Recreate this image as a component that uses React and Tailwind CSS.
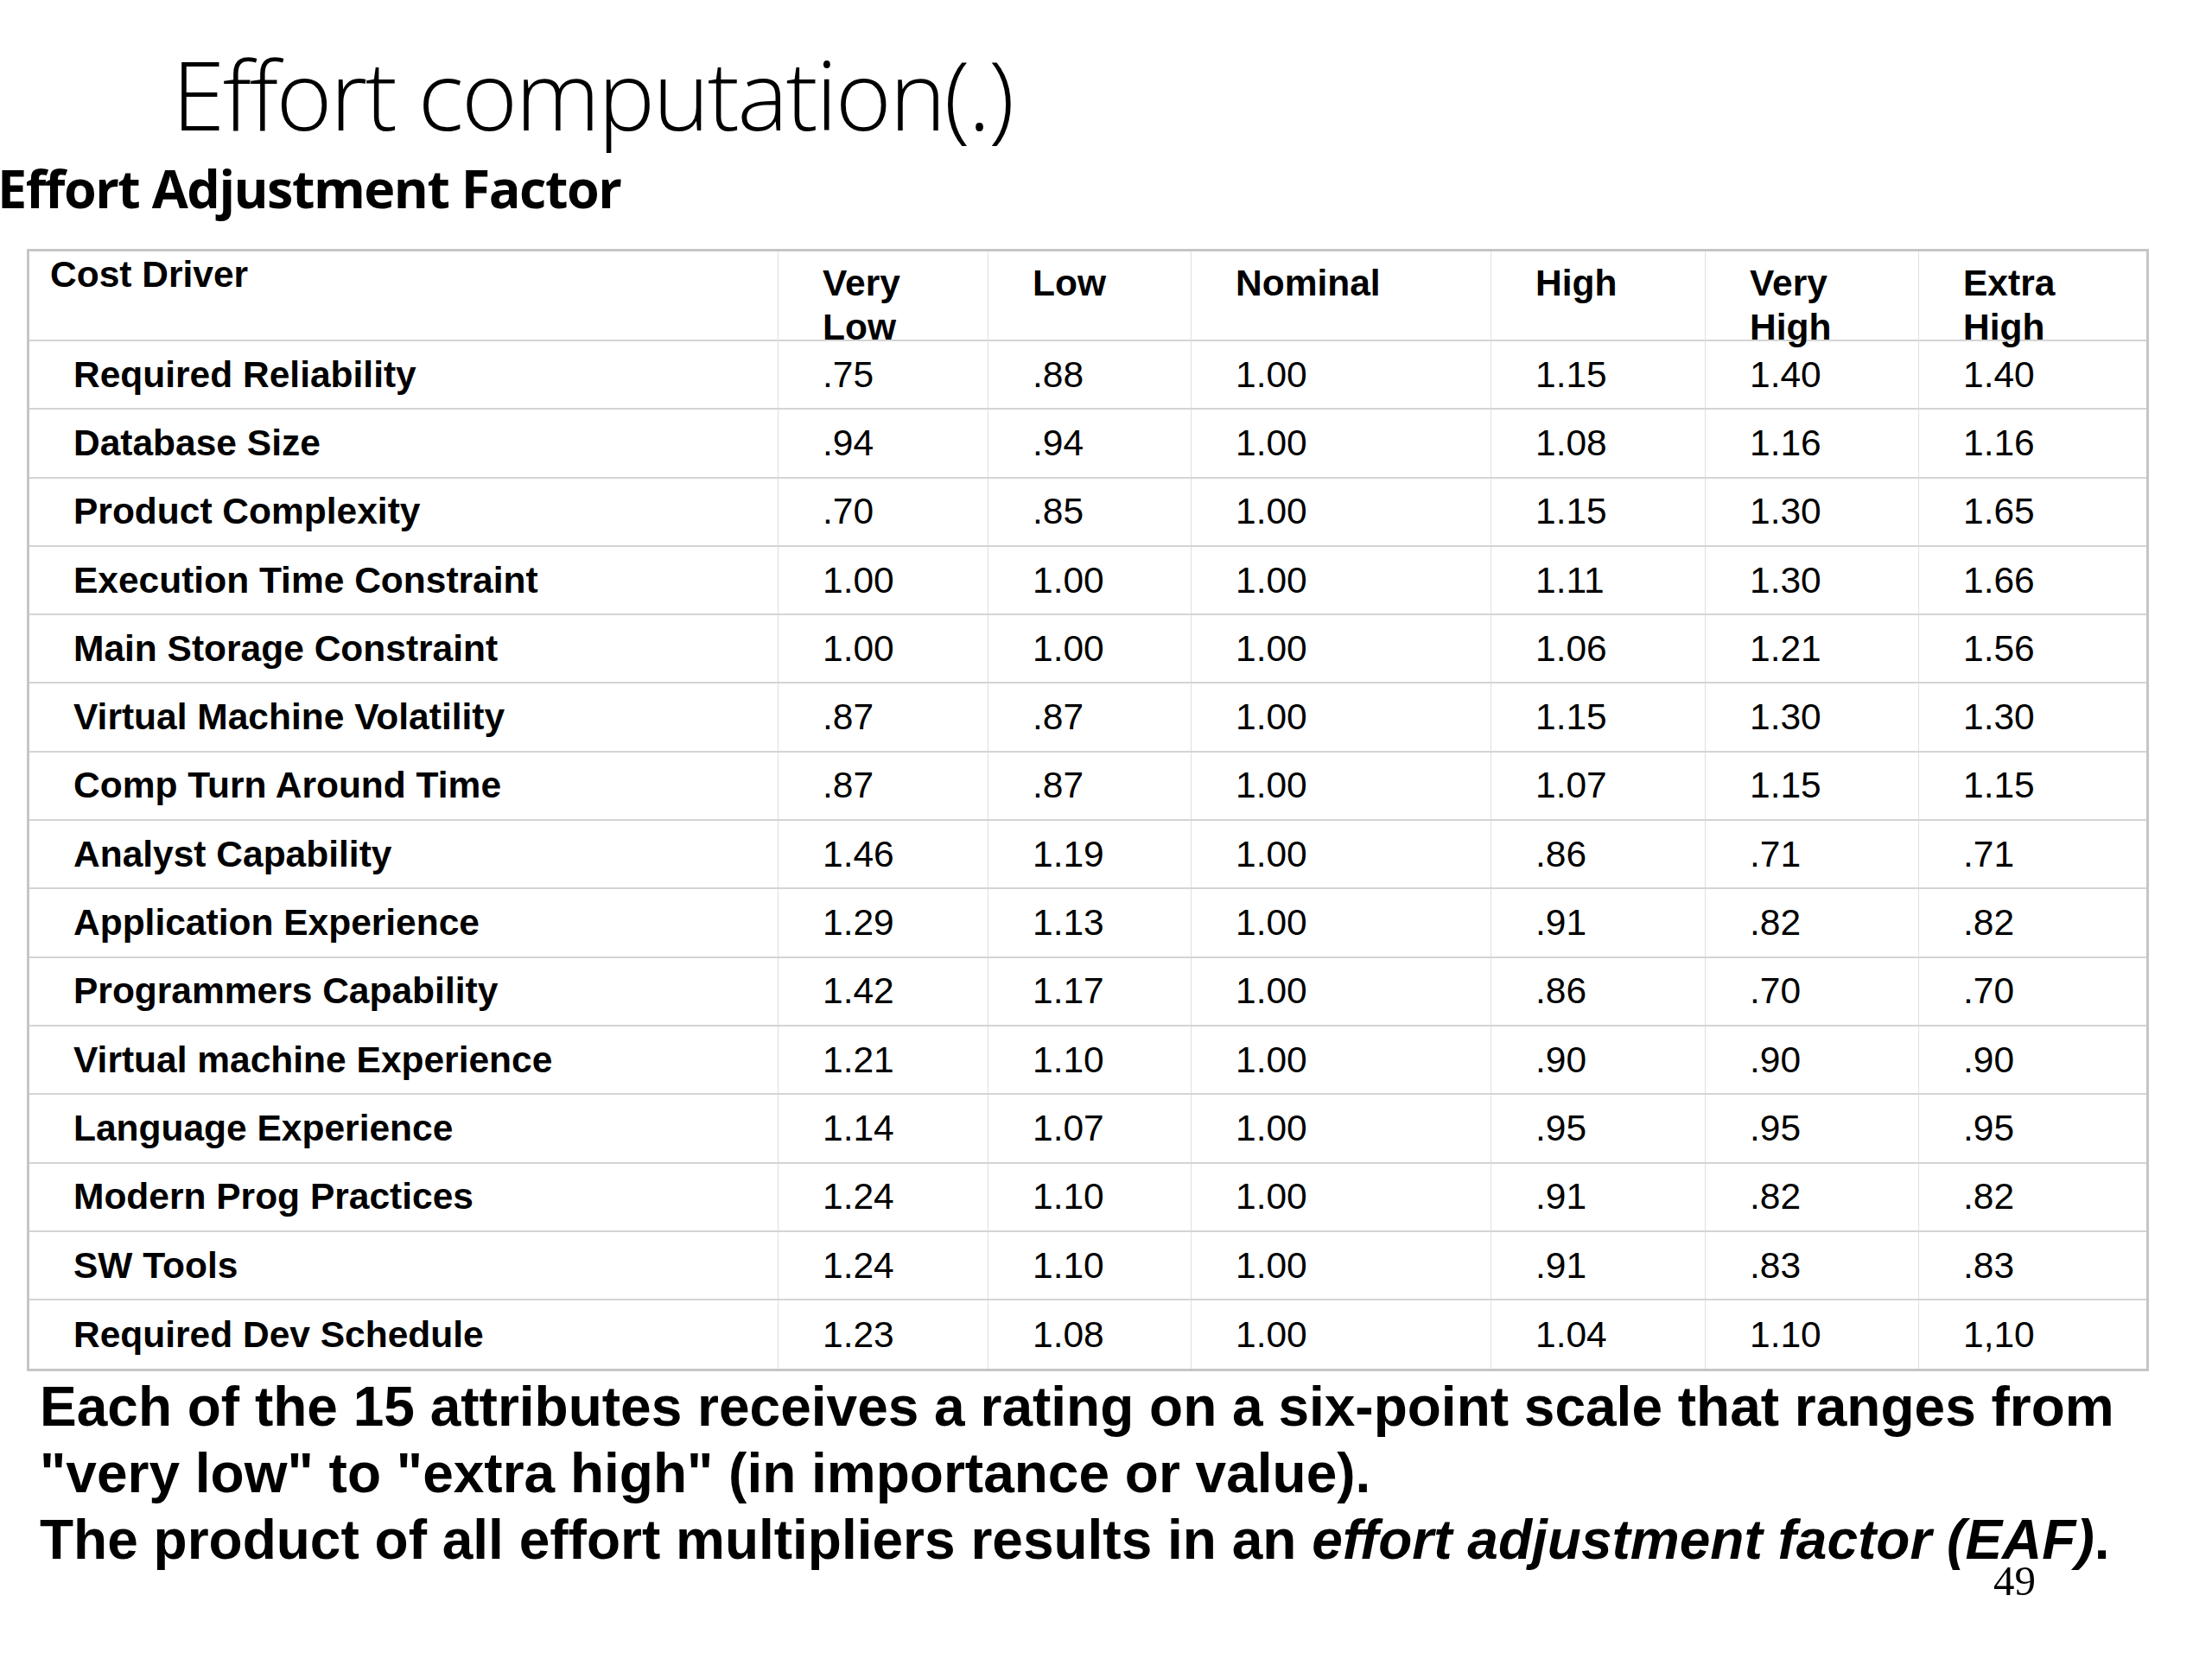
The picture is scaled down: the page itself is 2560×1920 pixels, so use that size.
const rows = [
  ['Required Reliability', '.75', '.88', '1.00', '1.15', '1.40', '1.40'],
  ['Database Size', '.94', '.94', '1.00', '1.08', '1.16', '1.16'],
  ['Product Complexity', '.70', '.85', '1.00', '1.15', '1.30', '1.65'],
  ['Execution Time Constraint', '1.00', '1.00', '1.00', '1.11', '1.30', '1.66'],
  ['Main Storage Constraint', '1.00', '1.00', '1.00', '1.06', '1.21', '1.56'],
  ['Virtual Machine Volatility', '.87', '.87', '1.00', '1.15', '1.30', '1.30'],
  ['Comp Turn Around Time', '.87', '.87', '1.00', '1.07', '1.15', '1.15'],
  ['Analyst Capability', '1.46', '1.19', '1.00', '.86', '.71', '.71'],
  ['Application Experience', '1.29', '1.13', '1.00', '.91', '.82', '.82'],
  ['Programmers Capability', '1.42', '1.17', '1.00', '.86', '.70', '.70'],
  ['Virtual machine Experience', '1.21', '1.10', '1.00', '.90', '.90', '.90'],
  ['Language Experience', '1.14', '1.07', '1.00', '.95', '.95', '.95'],
  ['Modern Prog Practices', '1.24', '1.10', '1.00', '.91', '.82', '.82'],
  ['SW Tools', '1.24', '1.10', '1.00', '.91', '.83', '.83'],
  ['Required Dev Schedule', '1.23', '1.08', '1.00', '1.04', '1.10', '1,10'],
]

const headers = [['Very', 'Low'], ['Low'], ['Nominal'], ['High'], ['Very', 'High'], ['Extra', 'High']]

export default function App() {
  return (
    <div className="w-[2560px] h-[1920px] bg-white overflow-hidden text-black">
      <h1 className="mt-[53px] pl-[199px] font-['Open_Sans',sans-serif] font-light text-[111px] leading-none tracking-[-2.5px]">
        Effort computation(.)
      </h1>
      <h2 className="mt-[23px] -ml-[3px] font-['Open_Sans',sans-serif] font-bold text-[61px] leading-none tracking-[-1.5px]">
        Effort Adjustment Factor
      </h2>

      <div className="mt-[40px] ml-[31px] w-[2456px] border-[3px] border-[#c6c6c6] font-['Liberation_Sans',Arial,sans-serif] text-[42.5px]">
        <div className="grid grid-cols-[867px_243px_235px_347px_248px_247px_263px] h-[104px] border-b-2 border-[#d4d4d4]">
          <div className="border-r border-[#e0e0e0] pl-[24px] font-bold leading-[51px] pt-[1px]">Cost Driver</div>
          {headers.map((h, i) => (
            <div
              key={i}
              className={`pl-[51px] pt-[11px] font-bold leading-[51px] whitespace-nowrap ${i < 5 ? 'border-r border-[#e0e0e0]' : ''}`}
            >
              {h.map((w) => (
                <div key={w}>{w}</div>
              ))}
            </div>
          ))}
        </div>
        {rows.map((r, ri) => (
          <div
            key={r[0]}
            className={`grid grid-cols-[867px_243px_235px_347px_248px_247px_263px] h-[79.3px] ${ri < rows.length - 1 ? 'border-b-2 border-[#d4d4d4]' : ''}`}
          >
            {r.map((c, ci) => (
              <div
                key={ci}
                className={`flex items-center leading-[48px] pl-[51px] ${ci === 0 ? 'font-bold' : ''} ${ci < 6 ? 'border-r border-[#e0e0e0]' : ''}`}
              >
                {c}
              </div>
            ))}
          </div>
        ))}
      </div>

      <p className="mt-[3px] pl-[46px] font-['Liberation_Sans',Arial,sans-serif] font-bold text-[64px] leading-[77px] whitespace-nowrap">
        Each of the 15 attributes receives a rating on a six-point scale that ranges from
        <br />
        "very low" to "extra high" (in importance or value).
        <br />
        The product of all effort multipliers results in an <i>effort adjustment factor (EAF)</i>.
      </p>
      <div className="-mt-[16px] pl-[2307px] font-['Liberation_Serif','Times_New_Roman',serif] text-[49px] leading-none">
        49
      </div>
    </div>
  )
}
